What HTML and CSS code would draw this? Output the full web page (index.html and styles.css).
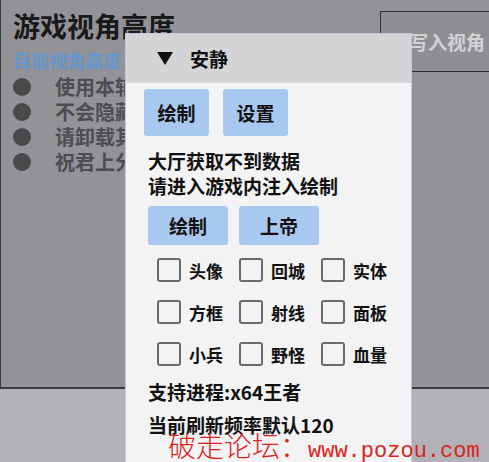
FILE: index.html
```html
<!DOCTYPE html>
<html>
    <head>
        <meta charset="utf-8">
        <link rel="stylesheet" href="styles.css">
    </head>
    <body>
        <section class="ventana">
            <div class="intro">
                <h1>游戏视角高度</h1>
                <div class="subtitulo">目前视角高度</div>
                <ul class="avisos">
                    <li><span class="punto"></span>使用本辅助</li>
                    <li><span class="punto"></span>不会隐藏</li>
                    <li><span class="punto"></span>请卸载其他</li>
                    <li><span class="punto"></span>祝君上分</li>
                </ul>
            </div>
            <button class="escribir">写入视角</button>
        </section>
        <div class="pie"></div>

        <div class="popup">
            <header class="popup-cabecera">
                <svg class="flecha" width="16" height="13" viewBox="0 0 16 13">
                    <polygon points="0,0 16,0 8,13"></polygon>
                </svg>
                <span>安静</span>
            </header>
            <div class="popup-cuerpo">
                <div class="fila-botones">
                    <button class="boton">绘制</button>
                    <button class="boton">设置</button>
                </div>
                <p class="info">大厅获取不到数据<br>请进入游戏内注入绘制</p>
                <div class="fila-botones segunda">
                    <button class="boton ancho">绘制</button>
                    <button class="boton ancho">上帝</button>
                </div>
                <div class="opciones">
                    <label class="opcion"><span class="caja"></span>头像</label>
                    <label class="opcion"><span class="caja"></span>回城</label>
                    <label class="opcion"><span class="caja"></span>实体</label>
                    <label class="opcion"><span class="caja"></span>方框</label>
                    <label class="opcion"><span class="caja"></span>射线</label>
                    <label class="opcion"><span class="caja"></span>面板</label>
                    <label class="opcion"><span class="caja"></span>小兵</label>
                    <label class="opcion"><span class="caja"></span>野怪</label>
                    <label class="opcion"><span class="caja"></span>血量</label>
                </div>
                <p class="estado">支持进程:x64王者<br>当前刷新频率默认120</p>
            </div>
        </div>

        <div class="marca"><span class="marca-cjk">破走论坛：</span><span class="marca-url">www.pozou.com</span></div>
    </body>
</html>
```

FILE: styles.css
```css
html,
body {
    height : 100%;
    margin : 0;
    padding: 0;
}

body {
    background-color: #b2b1b6;
    font-family     : "Noto Sans CJK SC", "Noto Sans", sans-serif;
    height          : 462px;
    overflow        : hidden;
    position        : relative;
    width           : 489px;
}

/* Ventana de fondo (atenuada) */
.ventana {
    background-color: #939397;
    border-bottom   : 2px solid #3b3a3e;
    border-left     : 1px solid #3b3a3e;
    box-sizing      : border-box;
    display         : flex;
    height          : 389px;
    padding         : 8px 0 0 12px;
}

.intro {
    flex: 1 1 auto;
}

.intro h1 {
    color      : #19191b;
    font-size  : 27px;
    font-weight: 700;
    line-height: 36px;
    margin     : 0;
}

.subtitulo {
    color      : #6496d0;
    font-size  : 18px;
    font-weight: 700;
    line-height: 22px;
    margin-top : 5px;
}

.avisos {
    list-style: none;
    margin    : 3px 0 0;
    padding   : 0;
}

.avisos li {
    align-items: center;
    color      : #4e4c50;
    display    : flex;
    font-size  : 20px;
    font-weight: 700;
    gap        : 24px;
    height     : 25px;
}

.punto {
    background-color: #4a484b;
    border-radius   : 50%;
    height          : 18px;
    width           : 18px;
}

.escribir {
    background-color: #8f8e93;
    border          : 1px solid #2f2e33;
    border-right    : none;
    box-sizing      : border-box;
    color           : #d2d2d4;
    flex            : none;
    font-family     : inherit;
    font-size       : 19px;
    font-weight     : 700;
    height          : 61px;
    margin-top      : 3px;
    padding         : 0 0 0 28px;
    text-align      : left;
    width           : 109px;
}

/* Ventana emergente */
.popup {
    background-color: #f3f3f3;
    border          : 1px solid #bfcadf;
    box-sizing      : border-box;
    height          : 440px;
    left            : 125px;
    position        : absolute;
    top             : 33px;
    width           : 287px;
}

.popup-cabecera {
    align-items     : center;
    background-color: #d4d4d6;
    color           : #111;
    display         : flex;
    font-size       : 19px;
    font-weight     : 700;
    gap             : 17px;
    height          : 49px;
    padding-left    : 31px;
}

.flecha {
    fill: #111;
}

.popup-cuerpo {
    padding: 6px 0 0 18px;
}

.fila-botones {
    display: flex;
    gap    : 14px;
}

.boton {
    background-color: #a9c8ef;
    border          : none;
    border-radius   : 3px;
    color           : #111;
    font-family     : inherit;
    font-size       : 19px;
    font-weight     : 700;
    height          : 47px;
    padding         : 0;
    width           : 65px;
}

.fila-botones.segunda {
    gap         : 11px;
    margin-top  : 8px;
    padding-left: 4px;
}

.boton.ancho {
    height: 39px;
    width : 80px;
}

.info,
.estado {
    color       : #111;
    font-size   : 19px;
    font-weight : 700;
    line-height : 25px;
    margin      : 12px 0 0;
    padding-left: 4px;
}

.opciones {
    display              : grid;
    grid-template-columns: repeat(3, 82px);
    margin-top           : 4px;
    padding-left         : 13px;
}

.opcion {
    align-items: center;
    color      : #111;
    display    : flex;
    font-size  : 17px;
    font-weight: 700;
    gap        : 8px;
    height     : 42px;
}

.caja {
    border       : 2px solid #6b6b6b;
    border-radius: 3px;
    box-sizing   : border-box;
    height       : 24px;
    width        : 24px;
}

.estado {
    line-height: 33px;
    margin-top : 0;
}

/* Marca de agua */
.marca {
    color      : #d9231d;
    left       : 168px;
    line-height: 34px;
    position   : absolute;
    top        : 428px;
    white-space: nowrap;
}

.marca-cjk {
    font-family: "Noto Sans CJK SC", serif;
    font-size  : 28px;
    font-weight: 300;
}

.marca-url {
    font-family: "Liberation Mono", monospace;
    font-size  : 22px;
}
```
